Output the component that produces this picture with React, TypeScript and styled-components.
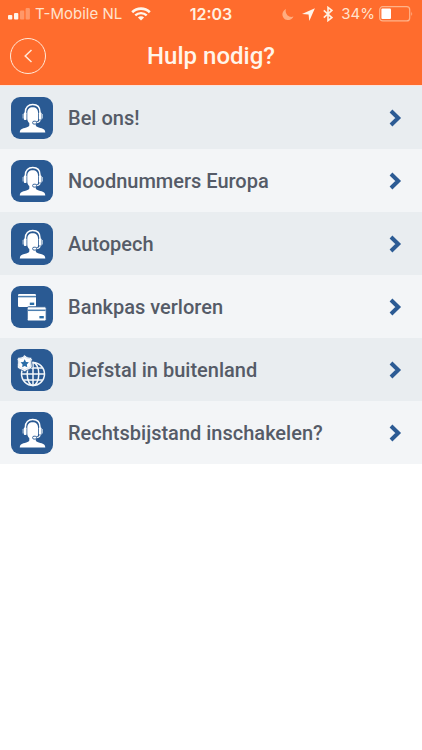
import React from "react";
import styled, { createGlobalStyle } from "styled-components";

const GlobalStyle = createGlobalStyle`
  *, *::before, *::after { box-sizing: border-box; }
  body { margin: 0; background: #ffffff; font-family: Roboto, "Open Sans", sans-serif; }
`;

const Screen = styled.div`
  min-height: 100vh;
  background: #ffffff;
`;

const Header = styled.header`
  background: #ff6c2d;
  color: #fff5ea;
  border-bottom: 1px solid #fbe3dc;
`;

const StatusBar = styled.div`
  display: grid;
  grid-template-columns: 1fr auto 1fr;
  align-items: center;
  height: 28px;
  padding: 0 8px;
  font-family: Inter, "Liberation Sans", sans-serif;
  font-size: 16px;
  line-height: 20px;
  color: #ffe3cd;
`;

const StatusGroup = styled.div<{ $end?: boolean }>`
  display: flex;
  align-items: center;
  justify-content: ${(p) => (p.$end ? "flex-end" : "flex-start")};
  gap: ${(p) => (p.$end ? 8 : 5)}px;
  white-space: nowrap;
  svg { flex: none; }
`;

const Battery = styled.span`
  display: flex;
  align-items: center;
  gap: 4px;
  font-size: 15px;
`;

const Carrier = styled.span`
  margin-right: 4px;
  font-size: 15px;
`;

const Clock = styled.time`
  font-weight: 600;
  color: #fff0e0;
`;

const TitleBar = styled.div`
  display: grid;
  grid-template-columns: 36px 1fr 36px;
  align-items: center;
  height: 57px;
  padding: 0 10px 2px;
`;

const BackButton = styled.button`
  display: flex;
  align-items: center;
  justify-content: center;
  width: 36px;
  height: 36px;
  padding: 0;
  border: 1px solid #ffe9d8;
  border-radius: 50%;
  background: transparent;
  color: #ffe9d8;
  cursor: pointer;
`;

const Title = styled.h1`
  margin: 0;
  font-size: 24px;
  line-height: 32px;
  font-weight: 500;
  text-align: center;
`;

const List = styled.ul`
  margin: 0;
  padding: 0;
  list-style: none;
`;

const Item = styled.li`
  background: #f3f5f7;
  &:nth-child(odd) { background: #e9edf0; }
`;

const RowLink = styled.a`
  display: flex;
  align-items: center;
  gap: 15px;
  height: 63px;
  padding: 0 20px 0 11px;
  color: #555b67;
  text-decoration: none;
`;

const IconTile = styled.span`
  display: flex;
  flex: none;
  width: 42px;
  height: 42px;
  border-radius: 9px;
  background: #2a5a93;
`;

const Label = styled.span`
  flex: 1;
  font-size: 20px;
  line-height: 28px;
  font-weight: 500;
`;

const SignalIcon = () => (
  <svg width="22" height="12" viewBox="0 0 22 12" fill="#fff5ea" aria-hidden="true">
    <rect x="0" y="7" width="4.3" height="4.5" rx="1" />
    <rect x="6" y="5" width="4.3" height="6.5" rx="1" />
    <rect x="12" y="2.5" width="4.3" height="9" rx="1" opacity=".32" />
    <rect x="17.6" y="0" width="4.3" height="11.5" rx="1" opacity=".32" />
  </svg>
);

const WifiIcon = () => (
  <svg width="20" height="14" viewBox="0 0 20 14" fill="none" stroke="#fff5ea" aria-hidden="true">
    <path d="M1.2 5.2a12.6 12.6 0 0 1 17.6 0" strokeWidth="2.6" />
    <path d="M4.3 8.4a8.2 8.2 0 0 1 11.4 0" strokeWidth="2.4" />
    <path d="M10 13.6 6.9 10.5a4.4 4.4 0 0 1 6.2 0Z" fill="#fff5ea" stroke="none" />
  </svg>
);

const MoonIcon = () => (
  <svg width="12" height="13" viewBox="0 0 13 13" fill="#ffad80" aria-hidden="true">
    <path d="M4.4.6a6.2 6.2 0 1 0 8 8.1A6.3 6.3 0 0 1 4.4.6Z" />
  </svg>
);

const LocationIcon = () => (
  <svg width="13" height="13" viewBox="0 0 13 13" fill="#fff5ea" aria-hidden="true">
    <path d="M12.9.2 7.3 13 6.6 6.6 0 6Z" />
  </svg>
);

const BluetoothIcon = () => (
  <svg width="10" height="16" viewBox="0 0 10 16" fill="none" stroke="#fff0e0" strokeWidth="1.6" aria-hidden="true">
    <path d="m.8 4.3 8 7.3L5 14.6V1.4l3.8 3-8 7.3" />
  </svg>
);

const BatteryIcon = () => (
  <svg width="35" height="16" viewBox="0 0 35 16" aria-hidden="true">
    <rect x=".7" y=".7" width="30" height="14.2" rx="3" fill="none" stroke="#ffb38a" strokeWidth="1.2" />
    <rect x="2.4" y="2.5" width="9.6" height="10.5" rx="1" fill="#fff" />
    <path d="M32.3 5.5q1.8 2.3 0 4.6Z" fill="#ffb38a" />
  </svg>
);

const BackIcon = () => (
  <svg width="14" height="16" viewBox="0 0 14 16" fill="none" stroke="currentColor" strokeWidth="1.5" aria-hidden="true">
    <path d="M10.5 2 4.2 8l6.3 6" />
  </svg>
);

const ChevronIcon = () => (
  <svg width="14" height="18" viewBox="0 0 14 18" fill="none" stroke="#2c5b94" strokeWidth="4" aria-hidden="true">
    <path d="m3 2 7.2 7L3 16" />
  </svg>
);

const AgentIcon = () => (
  <svg width="42" height="42" viewBox="0 0 42 42" fill="none" aria-hidden="true">
    <path
      d="M16.3 16c0-3.9 2-5.8 5.4-5.8s5.4 1.9 5.4 5.8v5.5c0 2.4-.8 4-2.3 5.2v1.6c0 1.2 1.1 1.6 3 2.1 4.3 1.1 6.5 1.7 6.5 5.2H8.8c0-3.5 2.2-4.1 6.5-5.2 1.9-.5 3-.9 3-2.1v-2.3c-1.3-1.2-2-2.6-2-4.6Z"
      fill="#fff"
    />
    <path d="M14.4 16.5V15c0-4.7 2.9-7.4 7.3-7.4S29 10.300 29 15v1.500" stroke="#fff" strokeWidth="1.500" />
    <rect x="12.900" y="15.500" width="2.600" height="7.500" rx=".8" fill="#fff" />
    <rect x="27.900" y="15.500" width="2.600" height="7.500" rx=".8" fill="#fff" />
    <path d="M12.100 17v4.500M31.300 17v4.500" stroke="#c5d5e4" strokeWidth="1" />
    <path d="M29.100 22.500c0 2.300-1.500 3.200-4.100 3.200" stroke="#2a5a93" strokeWidth="2.400" />
    <path d="M29.100 22.500c0 2.300-1.500 3.200-4.100 3.200" stroke="#fff" strokeWidth="1.100" />
    <rect x="21.600" y="24.200" width="4" height="2.900" rx="1.400" fill="#fff" stroke="#2a5a93" strokeWidth=".9" />
  </svg>
);

const CardsIcon = () => (
  <svg width="42" height="42" viewBox="0 0 42 42" aria-hidden="true">
    <rect x="7" y="8" width="18" height="13" rx="1.2" fill="#fff" />
    <path d="M7 10.6h18" stroke="#4c7fb0" strokeWidth="1.5" />
    <rect x="18.800" y="16.600" width="4.400" height="2.400" fill="#2a6ea8" />
    <rect x="16.200" y="20.800" width="19" height="14.200" rx="1.400" fill="#fff" stroke="#2a5a93" />
    <path d="M16.800 24.300h17.800" stroke="#4c7fb0" strokeWidth="1.500" />
    <rect x="28.400" y="30" width="4.400" height="2.400" fill="#2a6ea8" />
  </svg>
);

const TheftIcon = () => (
  <svg width="42" height="42" viewBox="0 0 42 42" fill="none" aria-hidden="true">
    <g stroke="#f3f7fa" strokeWidth="1.500">
      <circle cx="22" cy="25" r="11.500" />
      <ellipse cx="22" cy="25" rx="5.800" ry="11.500" />
      <path d="M22 13.500v23M10.500 25h23M12.400 19h19.200M12.400 31h19.200" />
    </g>
    <path
      d="M7.400 8.200c2.500.4 4.500-.4 6.300-2.400 1.800 2 3.800 2.800 6.300 2.400l1.300 2.400c-1.300 2.600-.2 4.400-.2 6.600 0 3.300-4 2.900-7.400 5.600-3.400-2.700-7.400-2.300-7.400-5.600 0-2.200 1.100-4 -.2-6.600Z"
      fill="#fff"
      stroke="#2a5a93"
      strokeWidth=".8"
    />
    <path
      d="M8.600 9.600c2 .1 3.700-.6 5.100-1.900 1.400 1.300 3.100 2 5.100 1.900l.9 1.300c-.8 2.100-.1 3.900-.1 5.800 0 2.200-3.200 2.200-5.900 4-2.700-1.800-5.900-1.800-5.900-4 0-1.900.7-3.700-.1-5.800Z"
      stroke="#b8cbdd"
      strokeWidth=".5"
    />
    <path d="m13.700 10.300 1.300 2.600 2.900.4-2.100 2.100.5 2.900-2.600-1.400-2.600 1.400.5-2.900-2.100-2.100 2.900-.4Z" fill="#2a6ea8" />
  </svg>
);

const items = [
  { id: "bel-ons", label: "Bel ons!", Icon: AgentIcon },
  { id: "noodnummers", label: "Noodnummers Europa", Icon: AgentIcon },
  { id: "autopech", label: "Autopech", Icon: AgentIcon },
  { id: "bankpas", label: "Bankpas verloren", Icon: CardsIcon },
  { id: "diefstal", label: "Diefstal in buitenland", Icon: TheftIcon },
  { id: "rechtsbijstand", label: "Rechtsbijstand inschakelen?", Icon: AgentIcon },
];

export default function App() {
  return (
    <Screen>
      <GlobalStyle />
      <Header>
        <StatusBar>
          <StatusGroup>
            <SignalIcon />
            <Carrier>T-Mobile NL</Carrier>
            <WifiIcon />
          </StatusGroup>
          <Clock>12:03</Clock>
          <StatusGroup $end>
            <MoonIcon />
            <LocationIcon />
            <BluetoothIcon />
            <Battery>
              34%
              <BatteryIcon />
            </Battery>
          </StatusGroup>
        </StatusBar>
        <TitleBar>
          <BackButton type="button" aria-label="Terug">
            <BackIcon />
          </BackButton>
          <Title>Hulp nodig?</Title>
        </TitleBar>
      </Header>
      <main>
        <List>
          {items.map(({ id, label, Icon }) => (
            <Item key={id}>
              <RowLink href={`#${id}`}>
                <IconTile>
                  <Icon />
                </IconTile>
                <Label>{label}</Label>
                <ChevronIcon />
              </RowLink>
            </Item>
          ))}
        </List>
      </main>
    </Screen>
  );
}
